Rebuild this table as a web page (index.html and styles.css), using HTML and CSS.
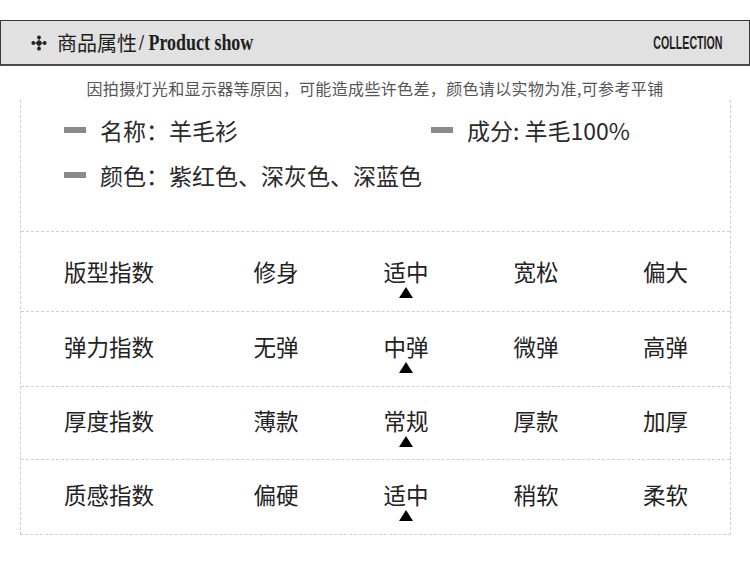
FILE: index.html
```html
<!DOCTYPE html>
<html lang="zh-CN">
<head>
<meta charset="utf-8">
<title>商品属性</title>
<link rel="stylesheet" href="styles.css">
</head>
<body>
<header class="bar">
  <div class="bar-title">
    <svg class="bar-icon" width="16" height="16" viewBox="0 0 16 16">
      <path d="M8 2V14M2 8H14" stroke="#222" stroke-width="1"/>
      <circle cx="8" cy="8" r="2.6" fill="#222"/>
      <circle cx="8" cy="2.3" r="1.9" fill="#222"/>
      <circle cx="8" cy="13.7" r="1.9" fill="#222"/>
      <circle cx="2.3" cy="8" r="1.9" fill="#222"/>
      <circle cx="13.7" cy="8" r="1.9" fill="#222"/>
    </svg>
    <span class="bar-cn">商品属性</span><span class="bar-en">/ Product show</span>
  </div>
  <span class="bar-right">COLLECTION</span>
</header>

<p class="note">因拍摄灯光和显示器等原因，可能造成些许色差，颜色请以实物为准,可参考平铺</p>

<section class="card">
  <div class="info">
    <div class="info-item"><span class="dash"></span>名称：羊毛衫</div>
    <div class="info-item"><span class="dash"></span>成分: 羊毛100%</div>
    <div class="info-item"><span class="dash"></span>颜色：紫红色、深灰色、深蓝色</div>
  </div>

  <div class="row row-first">
    <div class="label">版型指数</div>
    <div class="opt">修身</div>
    <div class="opt on">适中</div>
    <div class="opt">宽松</div>
    <div class="opt">偏大</div>
  </div>
  <div class="row">
    <div class="label">弹力指数</div>
    <div class="opt">无弹</div>
    <div class="opt on">中弹</div>
    <div class="opt">微弹</div>
    <div class="opt">高弹</div>
  </div>
  <div class="row row-mid">
    <div class="label">厚度指数</div>
    <div class="opt">薄款</div>
    <div class="opt on">常规</div>
    <div class="opt">厚款</div>
    <div class="opt">加厚</div>
  </div>
  <div class="row">
    <div class="label">质感指数</div>
    <div class="opt">偏硬</div>
    <div class="opt on">适中</div>
    <div class="opt">稍软</div>
    <div class="opt">柔软</div>
  </div>
</section>
</body>
</html>
```

FILE: styles.css
```css
* { box-sizing: border-box; }

html, body {
  margin: 0;
  padding: 0;
  background: #fff;
  width: 750px;
  height: 561px;
  overflow: hidden;
  font-family: "Noto Sans CJK SC", "Noto Sans", sans-serif;
  color: #222;
}

.bar {
  margin-top: 20px;
  width: 750px;
  height: 46px;
  background: #e1e1e1;
  border: 1px solid #3a3a3a;
  border-bottom: 2px solid #4a4a4a;
  display: flex;
  align-items: center;
  justify-content: space-between;
  padding: 0 27px 0 30px;
}

.bar-title {
  display: flex;
  align-items: center;
}

.bar-icon {
  display: block;
  margin-right: 10px;
}

.bar-cn {
  font-size: 20px;
  line-height: 24px;
  color: #1e1e1e;
}

.bar-en {
  display: inline-block;
  font-family: "Liberation Serif", serif;
  font-weight: bold;
  font-size: 23px;
  line-height: 24px;
  color: #1e1e1e;
  margin-left: 2px;
  transform: scaleX(0.78);
  transform-origin: left center;
  white-space: nowrap;
}

.bar-right {
  display: inline-block;
  font-family: "Liberation Sans", sans-serif;
  font-weight: bold;
  font-size: 19px;
  line-height: 20px;
  color: #1e1e1e;
  transform: scaleX(0.56);
  transform-origin: right center;
}

.note {
  margin: 10px 0 0;
  height: 24px;
  line-height: 24px;
  text-align: center;
  font-size: 16px;
  letter-spacing: 0.35px;
  color: #555;
}

.card {
  margin: 0 0 0 20px;
  width: 711px;
  border-left: 1px dashed #cfcfcf;
  border-right: 1px dashed #cfcfcf;
  border-bottom: 1px dashed #cfcfcf;
}

.info {
  display: grid;
  grid-template-columns: 367px 1fr;
  padding: 7px 0 34px 43px;
}

.info-item {
  display: flex;
  align-items: center;
  height: 45px;
  font-size: 23px;
  color: #2a2a2a;
  white-space: nowrap;
}

.dash {
  display: inline-block;
  width: 22px;
  height: 6px;
  background: #8a8a8a;
  margin-right: 14px;
}

.row {
  display: grid;
  grid-template-columns: 147px 130px 130px 130px 129px;
  padding: 21px 0 0 43px;
  height: 75px;
  border-top: 1px dashed #cfcfcf;
  font-size: 22.5px;
  line-height: 26px;
  color: #222;
}

.row-first {
  height: 80px;
  padding-top: 26px;
}

.row-mid {
  height: 73px;
  padding-top: 20px;
}

.label {
  text-align: left;
}

.opt {
  display: flex;
  flex-direction: column;
  align-items: center;
}

.opt.on::after {
  content: "";
  display: block;
  width: 0;
  height: 0;
  margin-top: 3px;
  border-left: 7px solid transparent;
  border-right: 7px solid transparent;
  border-bottom: 11px solid #000;
}
```
